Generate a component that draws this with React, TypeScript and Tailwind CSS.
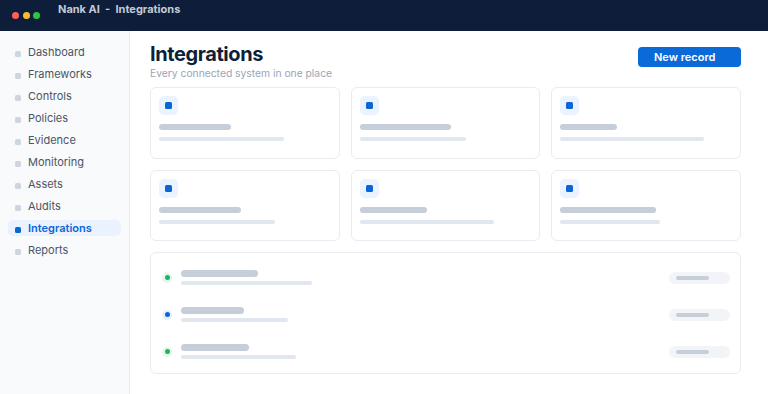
import React from 'react';

const NAV_ITEMS = [
  'Dashboard',
  'Frameworks',
  'Controls',
  'Policies',
  'Evidence',
  'Monitoring',
  'Assets',
  'Audits',
  'Integrations',
  'Reports',
];

// skeleton bar widths per card: [title, subtitle]
const CARDS: [number, number][] = [
  [72, 125],
  [91, 106],
  [57, 144],
  [82, 116],
  [67, 134],
  [96, 100],
];

const ROWS: { status: 'green' | 'blue'; title: number; sub: number }[] = [
  { status: 'green', title: 77, sub: 131 },
  { status: 'blue', title: 63, sub: 107 },
  { status: 'green', title: 68, sub: 115 },
];

function TitleBar() {
  return (
    <div className="h-[31px] bg-[#0e1e3a] flex items-start shrink-0">
      <div className="flex items-center gap-[3.5px] pl-[12px] pt-[12px]">
        <span className="w-[7px] h-[7px] rounded-full bg-[#ff5f57]" />
        <span className="w-[7px] h-[7px] rounded-full bg-[#febc2e]" />
        <span className="w-[7px] h-[7px] rounded-full bg-[#28c840]" />
      </div>
      <div className="ml-[18px] pt-[1px] text-[11px] leading-[16px] font-bold text-[#c3cad6]">
        Nank AI&nbsp;&nbsp;-&nbsp;&nbsp;Integrations
      </div>
    </div>
  );
}

function Sidebar() {
  return (
    <div className="w-[130px] shrink-0 bg-[#f8fafc] border-r border-[#e6eaf0] px-2 pt-[13px]">
      <div className="flex flex-col gap-[6px]">
        {NAV_ITEMS.map((item) => {
          const active = item === 'Integrations';
          return (
            <div
              key={item}
              className={`h-[16px] flex items-center gap-[7px] px-[7px] rounded-[5px] ${
                active ? 'bg-[#eaf2fd]' : ''
              }`}
            >
              <span
                className={`w-[6px] h-[6px] mt-[3px] rounded-[1.5px] ${
                  active ? 'bg-[#0a66d6]' : 'bg-[#cfd5de]'
                }`}
              />
              <span
                className={`text-[11px] leading-[14px] ${
                  active ? 'text-[#0a66d6] font-semibold' : 'text-[#4b5565]'
                }`}
              >
                {item}
              </span>
            </div>
          );
        })}
      </div>
    </div>
  );
}

function Card({ title, sub }: { title: number; sub: number }) {
  return (
    <div className="h-[71.5px] rounded-md border border-[#e8ecf1] bg-white p-2">
      <div className="w-[19px] h-[19px] rounded-[5px] bg-[#eaf3ff] flex items-center justify-center">
        <span className="w-[7px] h-[7px] rounded-[1.5px] bg-[#0a66d6]" />
      </div>
      <div className="mt-[9px] h-[6px] rounded-full bg-[#c6ced9]" style={{ width: title }} />
      <div className="mt-[7px] h-[4px] rounded-full bg-[#e1e7ef]" style={{ width: sub }} />
    </div>
  );
}

function ListCard() {
  return (
    <div className="mt-[11px] rounded-md border border-[#e8ecf1] bg-white pt-[6px] pb-[3px] pl-[11px] pr-[10px]">
      {ROWS.map((row, i) => (
        <div key={i} className="h-[37px] flex items-center">
          <span
            className={`w-[10px] h-[10px] rounded-full flex items-center justify-center ${
              row.status === 'green' ? 'bg-[#e4f7ec]' : 'bg-[#e6effc]'
            }`}
          >
            <span
              className={`w-[5px] h-[5px] rounded-full ${
                row.status === 'green' ? 'bg-[#18b85e]' : 'bg-[#0a66d6]'
              }`}
            />
          </span>
          <div className="ml-[9px] flex-1">
            <div className="h-[6.5px] rounded-full bg-[#c6ced9]" style={{ width: row.title }} />
            <div className="mt-[4px] h-[4px] rounded-full bg-[#e1e7ef]" style={{ width: row.sub }} />
          </div>
          <div className="w-[61px] h-[12px] rounded-full bg-[#f2f4f7] flex items-center pl-[7px]">
            <span className="w-[33px] h-[4px] rounded-full bg-[#c6ced9]" />
          </div>
        </div>
      ))}
    </div>
  );
}

export default function App() {
  return (
    <div className="w-[768px] h-[394px] flex flex-col overflow-hidden bg-white font-['Inter',sans-serif]">
      <TitleBar />
      <div className="flex flex-1 min-h-0">
        <Sidebar />

        {/* Main */}
        <div className="flex-1 pl-5 pt-[11px]">
          <div className="w-[591px]">
            <div className="flex items-start justify-between">
              <div>
                <h1 className="text-[20px] leading-[24px] font-bold tracking-[-0.4px] text-[#0f1f3a]">
                  Integrations
                </h1>
                <p className="text-[10.3px] leading-[14px] text-[#9aa4b6]">
                  Every connected system in one place
                </p>
              </div>
              <button className="mt-[5px] w-[103px] h-[20px] rounded-[4px] bg-[#0a6ad8] text-white text-[11px] font-semibold flex items-center pl-4">
                New record
              </button>
            </div>

            <div className="mt-[7px] grid grid-cols-3 gap-[11px]">
              {CARDS.map(([t, s], i) => (
                <Card key={i} title={t} sub={s} />
              ))}
            </div>

            <ListCard />
          </div>
        </div>
      </div>
    </div>
  );
}
